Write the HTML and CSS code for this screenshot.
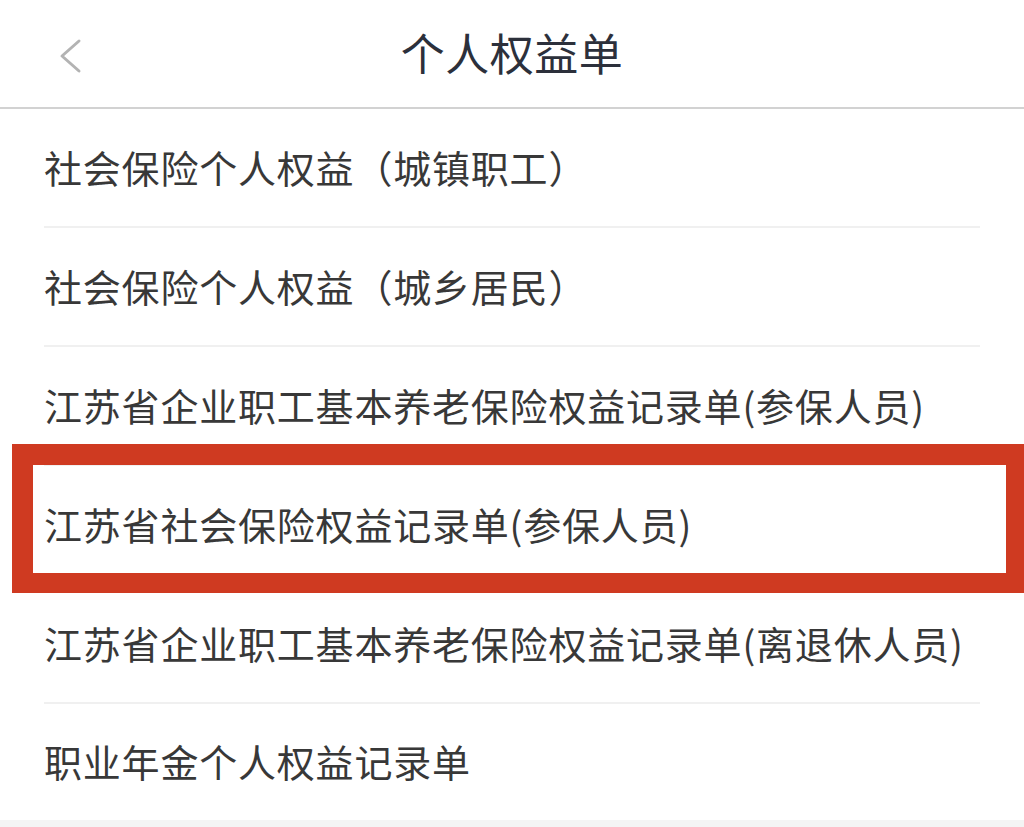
FILE: index.html
```html
<!DOCTYPE html>
<html lang="zh-CN">
<head>
<meta charset="utf-8">
<title>个人权益单</title>
<link rel="stylesheet" href="styles.css">
</head>
<body>
<div class="page">
  <header class="navbar">
    <span class="back" aria-label="返回">
      <svg width="24" height="36" viewBox="0 0 24 36"><path d="M20 3 L3 18 L20 33" fill="none" stroke="#b3b3b3" stroke-width="3" stroke-linecap="round" stroke-linejoin="round"/></svg>
    </span>
    <h1 class="title">个人权益单</h1>
  </header>
  <ul class="list">
    <li class="item"><span class="label">社会保险个人权益（城镇职工）</span></li>
    <li class="item"><span class="label">社会保险个人权益（城乡居民）</span></li>
    <li class="item"><span class="label">江苏省企业职工基本养老保险权益记录单(参保人员)</span></li>
    <li class="item highlighted"><span class="label">江苏省社会保险权益记录单(参保人员)</span><span class="mark"></span></li>
    <li class="item"><span class="label">江苏省企业职工基本养老保险权益记录单(离退休人员)</span></li>
    <li class="item last"><span class="label">职业年金个人权益记录单</span></li>
  </ul>
</div>
</body>
</html>
```

FILE: styles.css
```css
* { box-sizing: border-box; }
html, body {
  margin: 0;
  padding: 0;
  background: #f4f4f4;
  font-family: "Noto Sans CJK SC", "Noto Sans", sans-serif;
}
.page {
  width: 1024px;
  height: 827px;
  overflow: hidden;
  background: #f4f4f4;
}
.navbar {
  height: 109px;
  background: #fff;
  border-bottom: 2px solid #d2d2d2;
  display: flex;
  align-items: center;
  justify-content: center;
  position: relative;
}
.back {
  position: absolute;
  left: 59px;
  top: 38px;
  width: 24px;
  height: 36px;
  display: block;
}
.back svg { display: block; }
.title {
  margin: 0;
  font-size: 44px;
  font-weight: 400;
  color: #2c303b;
  line-height: 1;
  letter-spacing: 0.5px;
  margin-top: -4px;
}
.list {
  list-style: none;
  margin: 0;
  padding: 0;
  background: #fff;
}
.item {
  height: 119px;
  margin: 0 44px;
  border-bottom: 2px solid #f0f0f0;
  display: flex;
  align-items: center;
  position: relative;
}
.item.last {
  height: 116px;
  border-bottom: none;
}
.label {
  font-size: 38px;
  letter-spacing: 0.8px;
  color: #383838;
  line-height: 1;
  white-space: nowrap;
  margin-top: -2px;
}
.mark {
  position: absolute;
  left: -32px;
  right: -44px;
  top: -22px;
  height: 149px;
  border-style: solid;
  border-color: #cf3a21;
  border-width: 21px 18px 20px 21px;
}
```
